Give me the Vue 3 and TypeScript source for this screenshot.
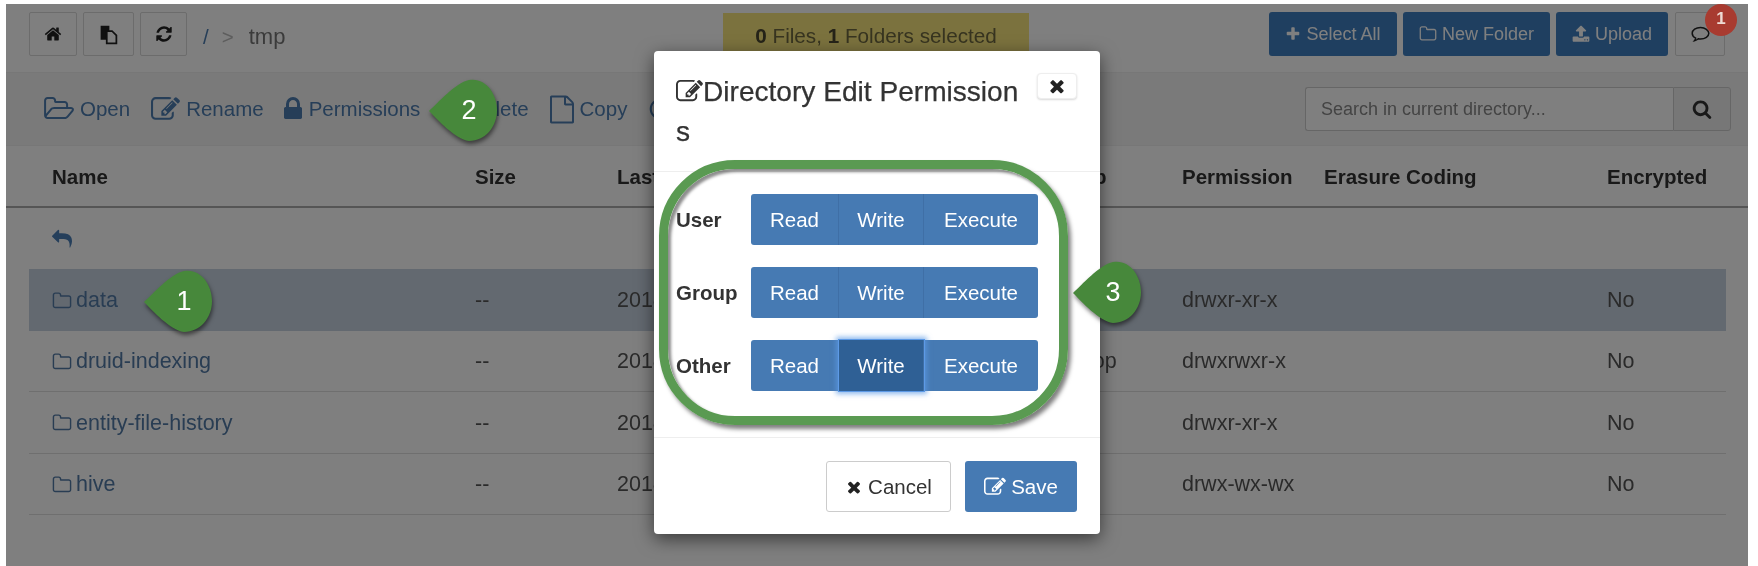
<template>
  <div class="page">
    <header class="topbar">
      <div class="crumbs">
        <button class="tool w48"><svg class="ic i18" viewBox="0 0 1792 1792"><path :d="icons.home" /></svg></button>
        <button class="tool w51">
          <svg class="paste" viewBox="0 0 24 24">
            <path d="M3 2h10v16H3z" fill="#222" />
            <path d="M10 8h6l5 5v9H10z" fill="#fff" stroke="#222" stroke-width="2" />
          </svg>
        </button>
        <button class="tool w47"><svg class="ic i18" viewBox="0 0 1792 1792"><path :d="icons.refresh" /></svg></button>
        <span class="slash">/</span>
        <span class="sep">&gt;</span>
        <span class="here">tmp</span>
      </div>
      <div class="alert"><b>0</b> Files, <b>1</b> Folders selected</div>
      <div class="actions">
        <button class="primary w128"><svg class="ic i16" viewBox="0 0 1792 1792"><path :d="icons.plus" /></svg>Select All</button>
        <button class="primary w147"><svg class="ic i18" viewBox="0 0 1792 1792"><path :d="icons.folder" /></svg>New Folder</button>
        <button class="primary w112"><svg class="ic i18" viewBox="0 0 1792 1792"><path :d="icons.upload" /></svg>Upload</button>
        <button class="tool w50 chat">
          <svg class="bubble" viewBox="0 0 24 24"><path d="M12 4c-5.300 0-9.500 3-9.500 6.700 0 2.300 1.600 4.300 4 5.500-.2 1.100-.7 2.100-1.400 2.900 1.700-.3 3.200-1.100 4.400-2.200.8.200 1.600.3 2.500.3 5.300 0 9.500-3 9.500-6.500S17.300 4 12 4z" /></svg>
        </button>
        <span class="badge">1</span>
      </div>
    </header>

    <nav class="toolbar">
      <a v-for="item in tools" :key="item.label" class="tool-link" :class="item.cls">
        <svg class="ic" :style="{ width: item.w + 'px', height: item.h + 'px' }" :viewBox="item.box"><path :d="item.d" /></svg>
        {{ item.label }}
      </a>
      <div class="search">
        <input placeholder="Search in current directory..." />
        <button><svg class="ic i20" viewBox="0 0 1792 1792"><path :d="icons.search" /></svg></button>
      </div>
    </nav>

    <div class="grid head">
      <span v-for="col in columns" :key="col">{{ col }}</span>
    </div>
    <div class="back"><svg class="ic i20" viewBox="0 0 1792 1792"><path :d="icons.reply" /></svg></div>
    <div v-for="row in rows" :key="row.name" class="grid row" :class="{ selected: row.selected }">
      <a class="name"><svg class="ic i20" viewBox="0 0 1792 1792"><path :d="icons.folder" /></svg>{{ row.name }}</a>
      <span>--</span>
      <span>2018</span>
      <span></span>
      <span>{{ row.group }}</span>
      <span>{{ row.perm }}</span>
      <span></span>
      <span>No</span>
    </div>

    <div class="backdrop"></div>

    <div class="modal">
      <div class="modal-head">
        <h4><svg class="ic i27" viewBox="0 0 1792 1792"><path :d="icons.edit" /></svg>Directory Edit Permissions</h4>
        <button class="close"><svg class="ic" viewBox="0 0 1792 1792"><path :d="icons.times" /></svg></button>
      </div>
      <div class="modal-body">
        <div v-for="who in perms" :key="who.label" class="perm-row">
          <label>{{ who.label }}</label>
          <div class="btn-group">
            <button class="w88">Read</button>
            <button class="w85" :class="{ active: who.writeActive }">Write</button>
            <button class="w114">Execute</button>
          </div>
        </div>
      </div>
      <div class="modal-foot">
        <button class="cancel"><svg class="ic i18" viewBox="0 0 1792 1792"><path :d="icons.times" /></svg>Cancel</button>
        <button class="save"><svg class="ic i22" viewBox="0 0 1792 1792"><path :d="icons.edit" /></svg>Save</button>
      </div>
      <div class="ring"></div>
    </div>

    <div v-for="c in callouts" :key="c.n" class="callout" :class="'c' + c.n">
      <svg viewBox="0 0 68 62"><path d="M0 32C9 24 26 4 40 1c16-3 28 13 28 30S56 62 40 62C26 60 9 41 0 32z" /></svg>
      <span>{{ c.n }}</span>
    </div>
  </div>
</template>

<script setup lang="ts">
const icons = {
  home: "M1472 992v480q0 26-19 45t-45 19h-384v-384h-256v384h-384q-26 0-45-19t-19-45v-480q0-1 .5-3t.5-3l575-474 575 474q1 2 1 6zm223-69l-62 74q-8 9-21 11h-3q-13 0-21-7l-692-577-692 577q-12 8-24 7-13-2-21-11l-62-74q-8-10-7-23.500t11-21.500l719-599q32-26 76-26t76 26l244 204v-195q0-14 9-23t23-9h192q14 0 23 9t9 23v408l219 182q10 8 11 21.500t-7 23.500z",
  refresh: "M1639 1056q0 5-1 7-64 268-268 434.500t-478 166.500q-146 0-282.500-55t-243.500-157l-129 129q-19 19-45 19t-45-19-19-45v-448q0-26 19-45t45-19h448q26 0 45 19t19 45-19 45l-137 137q71 66 161 102t187 36q134 0 250-65t186-179q11-17 53-117 8-23 30-23h192q13 0 22.500 9.500t9.500 22.500zm25-800v448q0 26-19 45t-45 19h-448q-26 0-45-19t-19-45 19-45l138-138q-148-137-349-137-134 0-250 65t-186 179q-11 17-53 117-8 23-30 23h-199q-13 0-22.500-9.500t-9.500-22.500v-7q65-268 270-434.500t480-166.500q146 0 284 55.500t245 156.500l130-129q19-19 45-19t45 19 19 45z",
  plus: "M1600 736v192q0 40-28 68t-68 28h-416v416q0 40-28 68t-68 28h-192q-40 0-68-28t-28-68v-416h-416q-40 0-68-28t-28-68v-192q0-40 28-68t68-28h416v-416q0-40 28-68t68-28h192q40 0 68 28t28 68v416h416q40 0 68 28t28 68z",
  folder: "M1600 1312v-704q0-40-28-68t-68-28h-704q-40 0-68-28t-28-68v-64q0-40-28-68t-68-28h-320q-40 0-68 28t-28 68v960q0 40 28 68t68 28h1216q40 0 68-28t28-68zm128-704v704q0 92-66 158t-158 66h-1216q-92 0-158-66t-66-158v-960q0-92 66-158t158-66h320q92 0 158 66t66 158v32h672q92 0 158 66t66 158z",
  folderOpen: "M1845 931q0-35-53-35h-1088q-40 0-85.500 21.500t-71.500 52.500l-294 363q-18 24-18 40 0 35 53 35h1088q40 0 86-22t71-53l294-363q18-22 18-39zm-1141-163h768v-160q0-40-28-68t-68-28h-576q-40 0-68-28t-28-68v-64q0-40-28-68t-68-28h-320q-40 0-68 28t-28 68v853l256-315q44-53 116-87.500t140-34.500zm1269 163q0 62-46 120l-295 363q-43 53-116 87.500t-140 34.500h-1088q-92 0-158-66t-66-158v-960q0-92 66-158t158-66h320q92 0 158 66t66 158v32h544q92 0 158 66t66 158v160h192q54 0 99 24.500t67 70.500q15 32 15 68z",
  upload: "M1344 1472q0-26-19-45t-45-19-45 19-19 45 19 45 45 19 45-19 19-45zm256 0q0-26-19-45t-45-19-45 19-19 45 19 45 45 19 45-19 19-45zm128-224v320q0 40-28 68t-68 28h-1472q-40 0-68-28t-28-68v-320q0-40 28-68t68-28h427q21 56 70.500 92t110.500 36h256q61 0 110.500-36t70.500-92h427q40 0 68 28t28 68zm-325-648q-17 40-59 40h-256v448q0 26-19 45t-45 19h-256q-26 0-45-19t-19-45v-448h-256q-42 0-59-40-17-39 14-69l448-448q19-19 45-19t45 19l448 448q31 30 14 69z",
  edit: "M888 1184l116-116-152-152-116 116v56h96v96h56zm440-720q-16-16-33 1l-350 350q-17 17-1 33t33-1l350-350q17-17 1-33zm80 594v190q0 119-84.500 203.500t-203.500 84.500h-832q-119 0-203.500-84.500t-84.500-203.500v-832q0-119 84.500-203.500t203.500-84.500h832q63 0 117 25 15 7 18 23 3 17-9 29l-49 49q-14 14-32 8-23-6-45-6h-832q-66 0-113 47t-47 113v832q0 66 47 113t113 47h832q66 0 113-47t47-113v-126q0-13 9-22l64-64q15-15 35-7t20 29zm-96-738l288 288-672 672h-288v-288zm444 132l-92 92-288-288 92-92q28-28 68-28t68 28l152 152q28 28 28 68t-28 68z",
  lock: "M640 768h512v-192q0-106-75-181t-181-75-181 75-75 181v192zm832 96v576q0 40-28 68t-68 28h-960q-40 0-68-28t-28-68v-576q0-40 28-68t68-28h32v-192q0-184 132-316t316-132 316 132 132 316v192h32q40 0 68 28t28 68z",
  trash: "M704 736v576q0 14-9 23t-23 9h-64q-14 0-23-9t-9-23v-576q0-14 9-23t23-9h64q14 0 23 9t9 23zm256 0v576q0 14-9 23t-23 9h-64q-14 0-23-9t-9-23v-576q0-14 9-23t23-9h64q14 0 23 9t9 23zm256 0v576q0 14-9 23t-23 9h-64q-14 0-23-9t-9-23v-576q0-14 9-23t23-9h64q14 0 23 9t9 23zm128 724v-948h-896v948q0 22 7 40.500t14.500 27 10.500 8.500h832q3 0 10.500-8.500t14.500-27 7-40.500zm-672-1076h448l-48-117q-7-9-17-11h-317q-10 2-17 11zm928 32v64q0 14-9 23t-23 9h-96v948q0 83-47 143.500t-113 60.500h-832q-66 0-113-58.500t-47-141.500v-952h-96q-14 0-23-9t-9-23v-64q0-14 9-23t23-9h309l70-167q15-37 54-63t79-26h320q40 0 79 26t54 63l70 167h309q14 0 23 9t9 23z",
  file: "M1596 380q28 28 48 76t20 88v1152q0 40-28 68t-68 28h-1344q-40 0-68-28t-28-68v-1600q0-40 28-68t68-28h896q40 0 88 20t76 48zm-444-244v376h376q-10-29-22-41l-313-313q-12-12-41-22zm384 1528v-1024h-416q-40 0-68-28t-28-68v-416h-768v1536h1280z",
  circle: "M896 128c424 0 768 344 768 768s-344 768-768 768-768-344-768-768 344-768 768-768zm0 160c-336 0-608 272-608 608s272 608 608 608 608-272 608-608-272-608-608-608z",
  search: "M1216 832q0-185-131.500-316.500t-316.500-131.500-316.500 131.500-131.500 316.500 131.500 316.500 316.500 131.500 316.500-131.500 131.500-316.500zm512 832q0 52-38 90t-90 38q-54 0-90-38l-343-342q-179 124-399 124-143 0-273.500-55.500t-225-150-150-225-55.500-273.500 55.500-273.500 150-225 225-150 273.500-55.500 273.500 55.500 225 150 150 225 55.500 273.500q0 220-124 399l343 343q37 37 37 90z",
  reply: "M1792 1120q0 166-127 451-3 7-10.500 24t-13.500 30-13 22q-12 17-28 17-15 0-23.500-10t-8.500-25q0-9 2.500-26.500t2.500-23.500q5-68 5-123 0-101-17.500-181t-48.500-138.500-80-101-105.500-69.500-133-42.500-154-21.500-175.500-6h-224v256q0 26-19 45t-45 19-45-19l-512-512q-19-19-19-45t19-45l512-512q19-19 45-19t45 19 19 45v256h224q713 0 875 403 53 134 53 333z",
  times: "M1490 1322q0 40-28 68l-136 136q-28 28-68 28t-68-28l-294-294-294 294q-28 28-68 28t-68-28l-136-136q-28-28-28-68t28-68l294-294-294-294q-28-28-28-68t28-68l136-136q28-28 68-28t68 28l294 294 294-294q28-28 68-28t68 28l136 136q28 28 28 68t-28 68l-294 294 294 294q28 28 28 68z",
};

const square = "0 0 1792 1792";
const tools = [
  { label: "Open", d: icons.folderOpen, box: "0 0 1972 1792", w: 31, h: 28 },
  { label: "Rename", d: icons.edit, box: square, w: 29, h: 29 },
  { label: "Permissions", d: icons.lock, box: "256 128 1280 1536", w: 20, h: 24, cls: "tight" },
  { label: "Delete", d: icons.trash, box: square, w: 22, h: 22 },
  { label: "Copy", d: icons.file, box: "128 0 1536 1792", w: 24, h: 29 },
  { label: "Move", d: icons.circle, box: square, w: 24, h: 24 },
];

const columns = ["Name", "Size", "Last Modified", "Owner", "Group", "Permission", "Erasure Coding", "Encrypted"];

const rows = [
  { name: "data", group: "hdfs", perm: "drwxr-xr-x", selected: true },
  { name: "druid-indexing", group: "hadoop", perm: "drwxrwxr-x" },
  { name: "entity-file-history", group: "hdfs", perm: "drwxr-xr-x" },
  { name: "hive", group: "hdfs", perm: "drwx-wx-wx" },
];

const perms = [
  { label: "User" },
  { label: "Group" },
  { label: "Other", writeActive: true },
];

const callouts = [{ n: 1 }, { n: 2 }, { n: 3 }];
</script>

<style>
html,
body {
  margin: 0;
  background: #fff;
}
</style>

<style scoped>
.page {
  position: relative;
  box-sizing: border-box;
  width: 1758px;
  height: 566px;
  overflow: hidden;
  padding: 4px 10px 0 6px;
  background: #fff;
  font-family: "Liberation Sans", Arial, sans-serif;
  font-size: 20.5px;
  color: #555;
  filter: blur(0.6px);
}
button {
  font-family: inherit;
  box-sizing: border-box;
}
.ic {
  fill: currentColor;
  flex: none;
}
.i16 { width: 16px; height: 16px; }
.i18 { width: 18px; height: 18px; }
.i20 { width: 20px; height: 20px; }
.i22 { width: 22px; height: 22px; }
.i27 { width: 27px; height: 27px; }
.w47 { width: 47px; }
.w48 { width: 48px; }
.w50 { width: 50px; }
.w51 { width: 51px; }
.w85 { width: 85px; }
.w88 { width: 88px; }
.w112 { width: 112px; }
.w114 { width: 114px; }
.w128 { width: 128px; }
.w147 { width: 147px; }

.topbar {
  display: grid;
  grid-template-columns: 694px 306px 1fr;
  box-sizing: border-box;
  height: 68px;
  padding: 8px 23px 0 23px;
}
.crumbs,
.actions {
  display: flex;
  align-items: flex-start;
}
.crumbs {
  gap: 6px;
}
.tool {
  display: flex;
  align-items: center;
  justify-content: center;
  height: 44px;
  border: 1px solid #d8d8d8;
  border-radius: 2px;
  background: #fff;
  color: #222;
}
.paste {
  width: 21px;
  height: 21px;
}
.slash,
.sep,
.here {
  line-height: 49px;
}
.slash {
  margin-left: 10px;
  color: #4c7cb0;
}
.sep {
  margin-left: 7px;
  color: #bbb;
}
.here {
  margin-left: 9px;
  font-size: 22px;
  color: #777;
}
.alert {
  box-sizing: border-box;
  height: 48px;
  margin-top: 1px;
  text-align: center;
  font-size: 20.700px;
  line-height: 45px;
  background: #f6e47c;
  color: #6e6840;
}
.alert b {
  color: #4a4630;
}
.actions {
  justify-content: flex-end;
  gap: 6px;
  position: relative;
}
.primary {
  display: flex;
  align-items: center;
  justify-content: center;
  gap: 5px;
  height: 44px;
  border: none;
  border-radius: 3px;
  background: #3f7fc0;
  color: #fff;
  font-size: 18px;
}
.chat {
  margin-left: 1px;
}
.bubble {
  width: 21px;
  height: 21px;
  fill: none;
  stroke: #222;
  stroke-width: 1.700;
}
.badge {
  position: absolute;
  z-index: 2;
  right: -12px;
  top: -8px;
  width: 32px;
  height: 32px;
  border-radius: 50%;
  background: #a83b30;
  color: #eedbd4;
  font-size: 17px;
  font-weight: bold;
  text-align: center;
  line-height: 30px;
}

.toolbar {
  display: flex;
  align-items: center;
  gap: 21px;
  box-sizing: border-box;
  height: 74px;
  padding: 0 17px 0 37px;
  border-top: 1px solid #eee;
  border-bottom: 1px solid #eee;
  background: #f5f5f5;
}
.tool-link {
  display: flex;
  align-items: center;
  gap: 6px;
  color: #4c7cb0;
}
.tight {
  margin-left: -2px;
}
.search {
  display: flex;
  margin-left: auto;
  height: 44px;
}
.search input {
  box-sizing: border-box;
  width: 368px;
  height: 44px;
  padding: 0 15px;
  border: 1px solid #ccc;
  border-right: none;
  border-radius: 3px 0 0 3px;
  background: #fff;
  font-family: inherit;
  font-size: 18px;
}
.search input::placeholder {
  color: #888;
}
.search button {
  display: flex;
  align-items: center;
  justify-content: center;
  width: 58px;
  height: 44px;
  border: 1px solid #ccc;
  border-radius: 0 3px 3px 0;
  background: #eee;
  color: #333;
}

.grid {
  display: grid;
  grid-template-columns: 423px 142px 263px 165px 137px 142px 283px 1fr;
  align-items: center;
  padding-left: 23px;
}
.head {
  height: 62px;
  padding-top: 2px;
  padding-left: 46px;
  border-bottom: 2px solid #aaa;
  font-weight: bold;
  color: #333;
  box-sizing: border-box;
}
.back {
  display: flex;
  align-items: center;
  height: 61px;
  padding-left: 46px;
  color: #4a7eb6;
}
.row {
  height: 61.500px;
  padding-top: 2px;
  margin: 0 22px 0 23px;
  box-sizing: border-box;
  border-bottom: 1px solid #dedede;
  font-size: 21.500px;
}
.row.selected {
  border-bottom: none;
  background: #c6d2e0;
}
.name {
  display: flex;
  align-items: center;
  gap: 4px;
  color: #527aa6;
  white-space: nowrap;
}

.backdrop {
  position: absolute;
  z-index: 1;
  inset: 4px 10px 0 6px;
  background: rgba(0, 0, 0, 0.5);
}

.modal {
  position: absolute;
  z-index: 2;
  left: 654px;
  top: 51px;
  width: 446px;
  height: 483px;
  border-radius: 4px;
  background: #fff;
  color: #333;
  box-shadow: 0 5px 18px rgba(0, 0, 0, 0.55);
}
.modal-head {
  display: flex;
  align-items: flex-start;
  box-sizing: border-box;
  height: 121px;
  padding: 21px 23px 0 22px;
  border-bottom: 1px solid #eee;
}
.modal-head h4 {
  width: 352px;
  margin: 0;
  font-size: 28.100px;
  font-weight: normal;
  line-height: 40px;
  word-break: break-all;
  -webkit-text-stroke: 0.25px #333;
}
.modal-head h4 .ic {
  vertical-align: -4px;
}
.close {
  display: flex;
  align-items: center;
  justify-content: center;
  width: 40px;
  height: 26px;
  margin: 1px 0 0 auto;
  border: 1px solid #eee;
  border-radius: 4px;
  background: #fff;
  box-shadow: 0 1px 2px rgba(0, 0, 0, 0.15);
  color: #222;
}
.close .ic {
  width: 20px;
  height: 20px;
}
.modal-body {
  display: flex;
  flex-direction: column;
  gap: 22px;
  box-sizing: border-box;
  height: 265px;
  padding: 22px 0 0 22px;
}
.perm-row {
  display: flex;
  align-items: center;
  height: 51px;
}
.perm-row label {
  width: 75px;
  font-weight: bold;
}
.btn-group {
  display: flex;
  overflow: visible;
}
.btn-group button {
  height: 51px;
  border: none;
  border-right: 1px solid #3f6fa6;
  background: #467ab3;
  color: #fff;
  font-size: 20.500px;
}
.btn-group button:first-child {
  border-radius: 3px 0 0 3px;
}
.btn-group button:last-child {
  border-right: none;
  border-radius: 0 3px 3px 0;
}
.btn-group .active {
  position: relative;
  background: #2f6095;
  box-shadow: 0 0 0 1px #5d9ae6, 0 0 5px 3px rgba(93, 154, 230, 0.7);
}
.modal-foot {
  display: flex;
  justify-content: flex-end;
  gap: 14px;
  box-sizing: border-box;
  height: 97px;
  padding: 23px 23px 0 0;
  border-top: 1px solid #eee;
}
.cancel,
.save {
  display: flex;
  align-items: center;
  justify-content: center;
  gap: 5px;
  height: 51px;
  border-radius: 3px;
  font-size: 20.500px;
}
.cancel {
  width: 125px;
  border: 1px solid #ccc;
  background: #fff;
  color: #333;
}
.cancel .ic {
  color: #222;
}
.save {
  width: 112px;
  border: none;
  background: #467ab3;
  color: #fff;
}
.ring {
  position: absolute;
  left: 5px;
  top: 109px;
  width: 409px;
  height: 265px;
  box-sizing: border-box;
  border: 9px solid #5a9a52;
  border-radius: 76px;
  box-shadow: 3px 4px 4px rgba(0, 0, 0, 0.5), inset 3px 3px 3px rgba(0, 0, 0, 0.45);
  pointer-events: none;
}

.callout {
  position: absolute;
  z-index: 3;
  display: flex;
  align-items: center;
  width: 68px;
  height: 62px;
  color: #fff;
  font-size: 27px;
}
.callout svg {
  position: absolute;
  inset: 0;
  width: 100%;
  height: 100%;
  overflow: visible;
  fill: #47883b;
  filter: drop-shadow(1px 3px 2px rgba(0, 0, 0, 0.5));
}
.callout span {
  position: relative;
  flex: none;
  width: 80px;
  text-align: center;
}
.c1 { left: 144px; top: 270px; }
.c2 { left: 429px; top: 79px; }
.c3 { left: 1073px; top: 261px; }
</style>
